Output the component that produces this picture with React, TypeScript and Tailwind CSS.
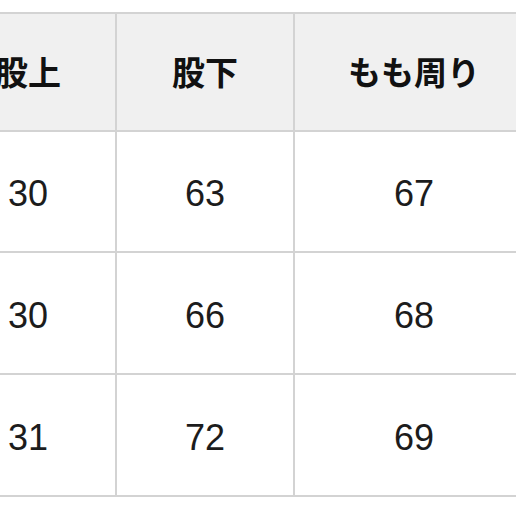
const rows = [
  ['30', '63', '67'],
  ['30', '66', '68'],
  ['31', '72', '69'],
];

const heads = ['股上', '股下', 'もも周り'];

const widths = ['w-[176px]', 'w-[178px]', 'w-[240px]'];
const rowHeights = ['h-[121px]', 'h-[122px]', 'h-[122px]'];

export default function App() {
  return (
    <div className="w-[516px] h-[516px] overflow-hidden bg-white pt-[12px]">
      <div className="ml-[-59px] w-[594px] border-t-2 border-[#d3d3d3]">
        {/* header */}
        <div className="flex h-[118px] bg-[#f0f0f0] border-b-2 border-[#d3d3d3]">
          {heads.map((h, i) => (
            <div
              key={h}
              className={`${widths[i]} shrink-0 border-r-2 border-[#d3d3d3] flex items-center justify-center text-[33px] font-bold text-[#111] [font-family:'Noto_Sans_CJK_JP',sans-serif]`}
            >
              {h}
            </div>
          ))}
        </div>

        {/* body */}
        {rows.map((r, ri) => (
          <div key={ri} className={`flex ${rowHeights[ri]} border-b-2 border-[#d3d3d3]`}>
            {r.map((v, i) => (
              <div
                key={i}
                className={`${widths[i]} shrink-0 border-r-2 border-[#d3d3d3] flex items-center justify-center pt-[5px] text-[36px] text-[#1c1c1c] [font-family:'Liberation_Sans',Arial,sans-serif]`}
              >
                {v}
              </div>
            ))}
          </div>
        ))}
      </div>
    </div>
  );
}
